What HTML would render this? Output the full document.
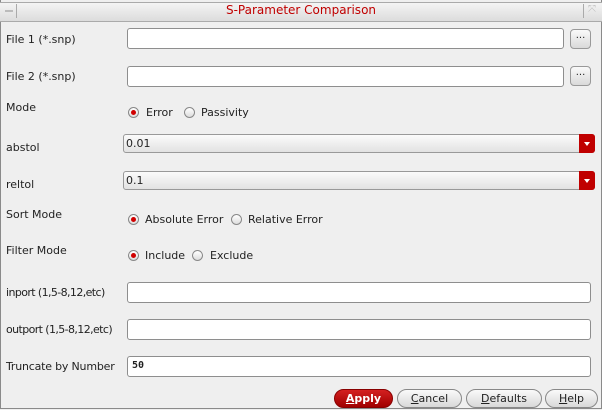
<!DOCTYPE html>
<html><head><style>
body{margin:0;width:602px;height:410px;background:#efefef;font-family:"DejaVu Sans","Liberation Sans",sans-serif;font-size:11px;color:#222;position:relative;overflow:hidden}
.a{position:absolute}
.frame{left:0;top:0;width:600px;height:408px;border:1px solid #8a8a8a;border-top:none}
.title{left:0;top:2px;width:602px;height:18px;background:linear-gradient(#f4f4f4,#dcdcdc);border-top:1px solid #aaa;border-bottom:1px solid #aaa}
.ttl{left:0;width:602px;top:3px;text-align:center;color:#c00000;font-size:12px}
.inp{background:#fff;border:1px solid #8e8e8e;border-radius:3px;box-sizing:border-box}
.btn{background:linear-gradient(#fafafa,#d9d9d9);border:1px solid #999;border-radius:4px;box-sizing:border-box;text-align:center;font-size:10px}
.combo{background:linear-gradient(#fbfbfb,#e2e2e2);border:1px solid #999;border-radius:3px;box-sizing:border-box;padding:2px 0 0 2px}
.dd{position:absolute;right:-1px;top:-1px;width:16px;height:19px;background:#c00000;border-radius:0 3px 3px 0}
.dd:after{content:"";position:absolute;left:5px;top:8px;border:3px solid transparent;border-top:4px solid #fff}
.r{width:11px;height:11px;border-radius:50%;border:1px solid #888;background:linear-gradient(#fff,#ddd);box-sizing:border-box}
.r.on:after{content:"";position:absolute;left:2px;top:2px;width:5px;height:5px;border-radius:50%;background:#d00000}
.pb{height:19px;border-radius:10px;border:1px solid #888;box-sizing:border-box;background:linear-gradient(#fafafa,#d8d8d8);text-align:center;line-height:17px;font-size:11px}
.t{letter-spacing:-0.6px}
u{text-decoration:underline}
</style></head><body>
<div class="a frame"></div>
<div class="a title"></div>
<div class="a" style="left:2px;top:4px;width:14px;height:14px;border-right:1px solid #aaa"><div style="margin:6px 3px;height:2px;background:#bbb"></div></div>
<div class="a" style="left:583px;top:4px;width:16px;height:14px;border-left:1px solid #aaa;color:#bbb;font-size:10px;text-align:center">⤧</div>
<div class="a ttl">S-Parameter Comparison</div>

<div class="a" style="left:6px;top:33px">File 1 (*.snp)</div>
<div class="a inp" style="left:127px;top:28px;width:437px;height:21px"></div>
<div class="a btn" style="left:570px;top:29px;width:21px;height:20px">...</div>
<div class="a" style="left:6px;top:70px">File 2 (*.snp)</div>
<div class="a inp" style="left:127px;top:66px;width:437px;height:21px"></div>
<div class="a btn" style="left:570px;top:66px;width:21px;height:20px">...</div>

<div class="a" style="left:6px;top:101px">Mode</div>
<div class="a r on" style="left:128px;top:107px"></div><div class="a" style="left:146px;top:106px">Error</div>
<div class="a r" style="left:184px;top:107px"></div><div class="a" style="left:201px;top:106px">Passivity</div>

<div class="a" style="left:6px;top:141px">abstol</div>
<div class="a combo" style="left:123px;top:134px;width:472px;height:19px">0.01<div class="dd"></div></div>
<div class="a" style="left:6px;top:178px">reltol</div>
<div class="a combo" style="left:123px;top:171px;width:472px;height:19px">0.1<div class="dd"></div></div>

<div class="a" style="left:6px;top:208px">Sort Mode</div>
<div class="a r on" style="left:128px;top:214px"></div><div class="a" style="left:145px;top:213px">Absolute Error</div>
<div class="a r" style="left:231px;top:214px"></div><div class="a" style="left:248px;top:213px">Relative Error</div>

<div class="a" style="left:6px;top:244px">Filter Mode</div>
<div class="a r on" style="left:128px;top:250px"></div><div class="a" style="left:145px;top:249px">Include</div>
<div class="a r" style="left:192px;top:250px"></div><div class="a" style="left:210px;top:249px">Exclude</div>

<div class="a t" style="left:6px;top:286px">inport (1,5-8,12,etc)</div>
<div class="a inp" style="left:127px;top:282px;width:464px;height:21px"></div>
<div class="a t" style="left:6px;top:323px">outport (1,5-8,12,etc)</div>
<div class="a inp" style="left:127px;top:319px;width:464px;height:21px"></div>
<div class="a" style="left:6px;top:360px;letter-spacing:-0.2px">Truncate by Number</div>
<div class="a inp" style="left:127px;top:356px;width:464px;height:21px;padding:3px 0 0 4px;font-family:'DejaVu Sans Mono',monospace;font-weight:bold;font-size:10px">50</div>

<div class="a pb" style="left:334px;top:389px;width:59px;background:linear-gradient(#d42020,#a00000);border-color:#800;color:#fff;font-weight:bold"><u>A</u>pply</div>
<div class="a pb" style="left:397px;top:389px;width:65px"><u>C</u>ancel</div>
<div class="a pb" style="left:466px;top:389px;width:76px"><u>D</u>efaults</div>
<div class="a pb" style="left:545px;top:389px;width:53px"><u>H</u>elp</div>
</body></html>
